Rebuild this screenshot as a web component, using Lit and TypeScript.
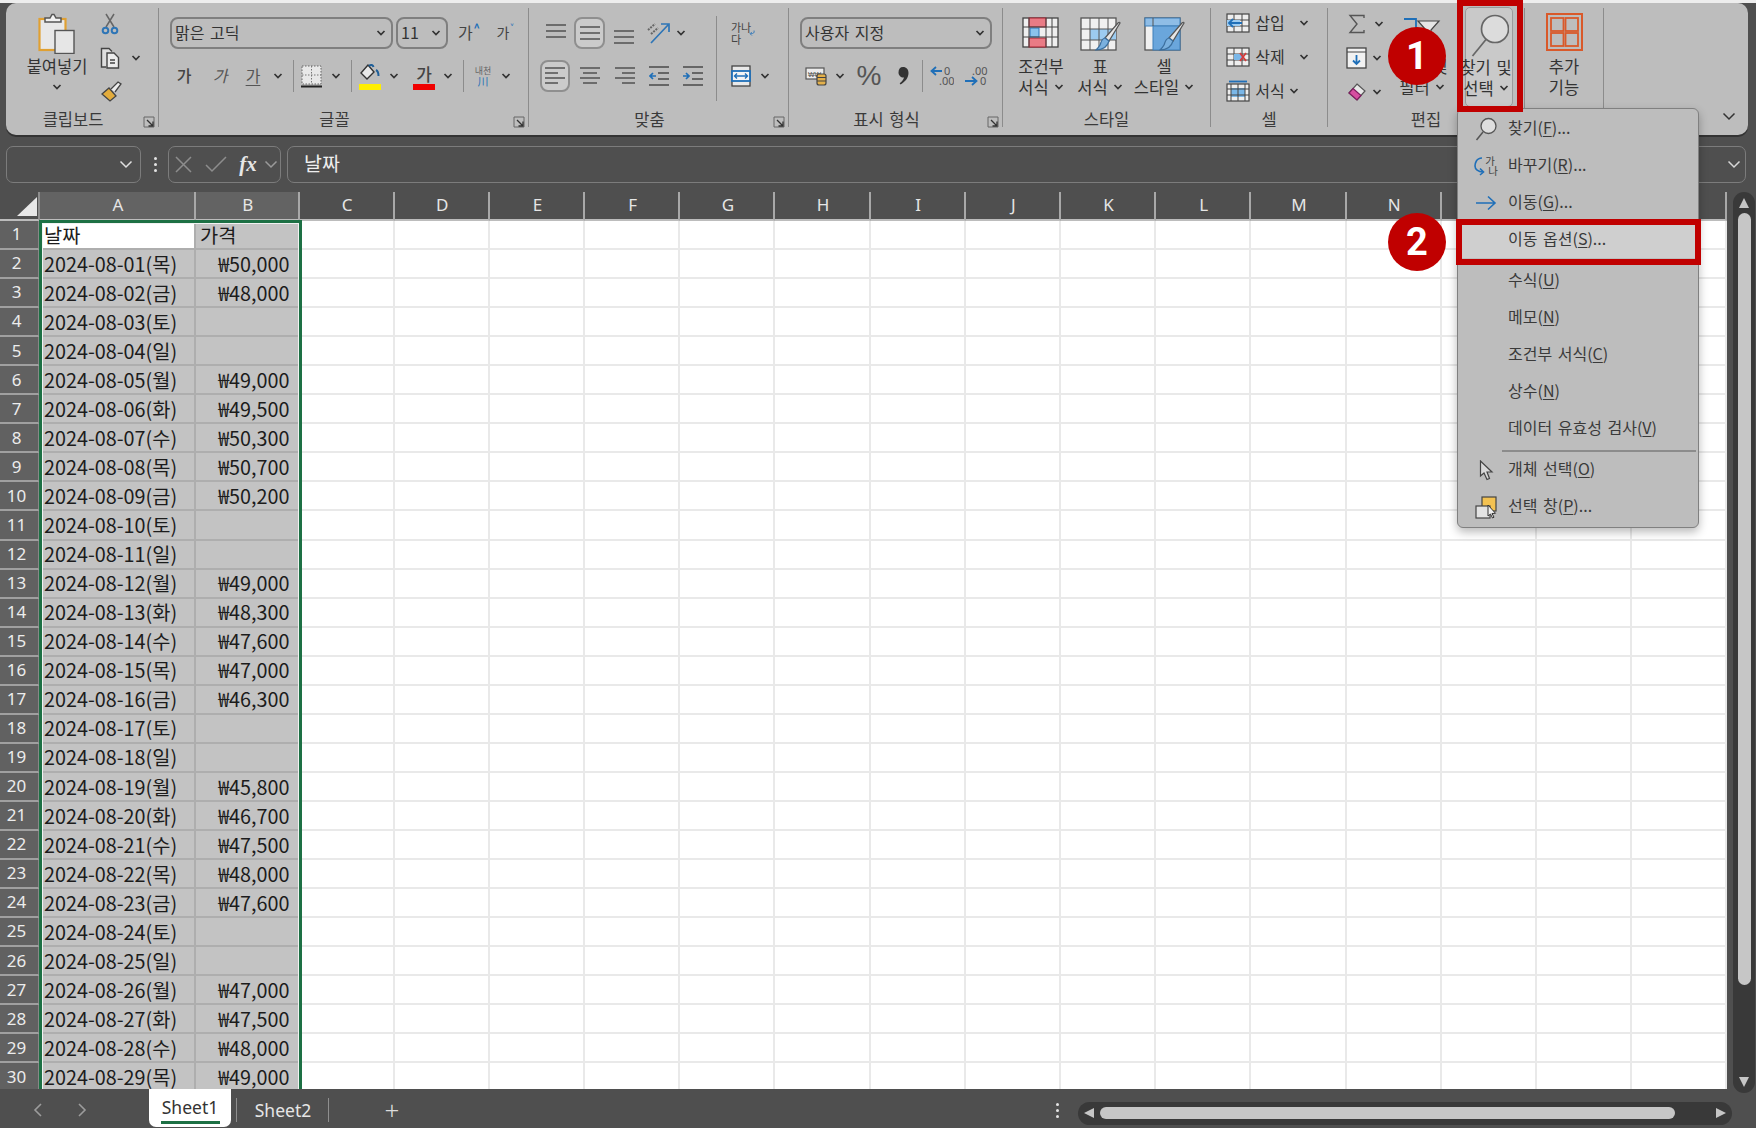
import { LitElement, html, css, svg } from "lit";
import { customElement } from "lit/decorators.js";

type Item = [number, number, unknown, string?];
const place = (items: Item[], x0: number) => {
  let p = x0;
  return items.map(([x, w, c, cls = ""]) => {
    const m = x - p;
    p = x + w;
    return html`<div class="t ${cls}" style="margin-left:${m}px;width:${w}px">${c}</div>`;
  });
};

const icon = (w: number, h: number, body: unknown) =>
  html`<svg width=${w} height=${h} viewBox="0 0 ${w} ${h}" fill="none">${body}</svg>`;
const chev = (c = "#333") =>
  html`<svg width="10" height="6" viewBox="0 0 10 6" fill="none"><path d="M1.5 1l3.5 3.5L8.5 1" stroke=${c} stroke-width="1.7"/></svg>`;
const bigChev = (c = "#333") =>
  html`<svg width="14" height="9" viewBox="0 0 14 9" fill="none"><path d="M1.5 1.5l5.5 5.5 5.5-5.5" stroke=${c} stroke-width="1.5"/></svg>`;

const pasteI = icon(37, 41, svg`
  <rect x="1.5" y="6" width="26" height="31" fill="#e8e8e8" stroke="#e0a032" stroke-width="2.2"/>
  <path d="M7 9V5h5l2-3.5h2L18 5h5v4z" fill="#f2f2f2" stroke="#555" stroke-width="1.5"/>
  <rect x="17" y="17.5" width="19" height="23" fill="#e6e6e6" stroke="#555" stroke-width="1.4"/>`);
const cutI = icon(18, 22, svg`
  <path d="M5 1l8 13M13 1L5 14" stroke="#666" stroke-width="1.5"/>
  <circle cx="4.5" cy="17.5" r="2.8" stroke="#2e75b6" stroke-width="2"/>
  <circle cx="13.5" cy="17.5" r="2.8" stroke="#2e75b6" stroke-width="2"/>`);
const copyI = icon(20, 22, svg`
  <path d="M6 20H1.5V1.5H9l3 3" stroke="#444" stroke-width="1.4" fill="#dedede"/>
  <path d="M7 6h7l4.500 4.500V21H7z" fill="#ececec" stroke="#444" stroke-width="1.4"/>
  <path d="M10 13h5M10 16h5" stroke="#444" stroke-width="1.3"/>`);
const painterI = icon(21, 21, svg`
  <path d="M1 13l7-6 7 8-6 5z" fill="#e3ac3c" stroke="#444" stroke-width="1.3"/>
  <path d="M10 8l7-7 3 2-6 8" fill="#ededed" stroke="#444" stroke-width="1.3"/>`);
const borderI = icon(21, 23, svg`
  <rect x="1" y="1" width="19" height="18" fill="#e8e8e8" stroke="#666" stroke-dasharray="1.500 1.500"/>
  <path d="M10.500 1v18M1 10h19" stroke="#777" stroke-dasharray="1.500 1.500"/>
  <path d="M0 21.500h21" stroke="#222" stroke-width="2"/>`);
const fillI = icon(22, 27, svg`
  <path d="M9 2L2 10l6 6 7-7z" fill="#e8e8e8" stroke="#333" stroke-width="1.4"/>
  <path d="M10 3c2-2 4-1 4.500 1M17 7c2 1 2.500 3 2.500 6" stroke="#1f5f99" stroke-width="2"/>
  <rect x="0" y="21" width="22" height="6" fill="#ffee00"/>`);
const alignLines = (ys: number[], w = 20, xs: [number, number][] = []) =>
  icon(w, 22, svg`${ys.map((y, i) => {
    const [a, b] = xs[i] ?? [0, w];
    return svg`<path d="M${a} ${y}H${b}" stroke="#4a4a4a" stroke-width="1.400"/>`;
  })}`);
const orientI = icon(24, 24, svg`
  <path d="M4 22L21 4M14 3h8v8" stroke="#2e75b6" stroke-width="1.700"/>
  <path d="M1 9l7-6M4 13l7-6" stroke="#666" stroke-width="2" stroke-dasharray="2 1"/>`);
const indentI = (out: boolean) => icon(20, 22, svg`
  <path d="M0 2H20M0 20H20M9 8H20M9 14H20" stroke="#4a4a4a" stroke-width="1.400"/>
  <path d=${out ? "M7 11H1M4 8l-3 3 3 3" : "M0 11H6M3 8l3 3-3 3"} stroke="#1f6fb8" stroke-width="1.700"/>`);
const mergeI = icon(20, 22, svg`
  <rect x="1" y="1" width="18" height="20" fill="#e9e9e9" stroke="#444" stroke-width="1.300"/>
  <rect x="1" y="6" width="18" height="10" fill="#f4f4f4" stroke="#1f6fb8" stroke-width="1.800"/>
  <path d="M4 11h12M6 8.500L3.500 11 6 13.500M14 8.500l2.500 2.500-2.500 2.500" stroke="#1f6fb8" stroke-width="1.400"/>`);
const acctI = icon(22, 20, svg`
  <rect x="1" y="2" width="18" height="11" fill="#ececec" stroke="#555" stroke-width="1.200"/>
  <text x="3" y="10.500" font-size="7" fill="#555" font-family="Liberation Sans">₩₩</text>
  <rect x="12" y="8" width="9" height="11" rx="2" fill="#e3b04b" stroke="#444" stroke-width="1.200"/>
  <path d="M12 11.500h9M12 15h9" stroke="#444"/>`);
const cfI = icon(37, 31, svg`
  <rect x="1" y="1" width="35" height="29" fill="#efefef" stroke="#444" stroke-width="1.300"/>
  <rect x="7" y="1" width="17" height="9" fill="#e97b85" stroke="#a62231"/>
  <rect x="7" y="21" width="17" height="9" fill="#e97b85" stroke="#a62231"/>
  <rect x="8" y="11" width="9" height="9" fill="#8bc3ec" stroke="#2e75b6"/>
  <path d="M7 1v29M24 1v29M30 1v29M1 10h35M1 20h35" stroke="#444" stroke-width="1"/>`);
const brush = svg`
  <path d="M38 6c1-1 2-1 2 0L29 24l-4-3z" fill="#e6e6e6" stroke="#555" stroke-width="1.200"/>
  <path d="M25 21c-4 1-4 5-5 7-1 2-3 4-4 5 5 0 11-2 13-9z" fill="#7ab0de" stroke="#3c6f9e" stroke-width="1.200"/>`;
const tableI = icon(41, 36, svg`
  <rect x="1" y="1" width="35" height="32" fill="#f0f0f0" stroke="#555" stroke-width="1.300"/>
  <rect x="10" y="12" width="26" height="11" fill="#9ccbf0"/>
  <path d="M10 1v32M19 1v32M28 1v32M1 12h35M1 23h35" stroke="#555"/>${brush}`);
const cellStyleI = icon(41, 36, svg`
  <rect x="1" y="1" width="35" height="32" fill="#f0f0f0" stroke="#555" stroke-width="1.300"/>
  <rect x="1" y="1" width="35" height="8" fill="#8fbde6" stroke="#3e7fb8"/>
  <rect x="9" y="9" width="27" height="24" fill="#6aa6dc" stroke="#3e7fb8"/>
  <path d="M9 1v8" stroke="#555"/>${brush}`);
const grid3 = (extra: unknown) => icon(24, 20, svg`
  <rect x="1" y="1" width="22" height="18" fill="#eee" stroke="#444" stroke-width="1.200"/>
  <path d="M8 1v18M16 1v18M1 7h22M1 13h22" stroke="#444" stroke-width="1"/>${extra}`);
const insI = grid3(svg`<rect x="1" y="7" width="13" height="6" fill="#9ccbf0"/><path d="M16 10H3M7 6l-4 4 4 4" stroke="#1f6fb8" stroke-width="1.800"/>`);
const delI = grid3(svg`<rect x="8" y="7" width="8" height="6" fill="#7ab7e8"/><path d="M14 6l6 8M20 6l-6 8" stroke="#d43b3b" stroke-width="1.800"/>`);
const fmtI = icon(24, 22, svg`
  <rect x="1" y="4" width="22" height="17" fill="#eee" stroke="#444" stroke-width="1.200"/>
  <rect x="5" y="8" width="14" height="9" fill="#7ab7e8"/>
  <path d="M5 4v17M12 4v17M19 4v17M1 9h22M1 15h22" stroke="#444" stroke-width="1"/>
  <path d="M3 1.500h18" stroke="#1f6fb8" stroke-width="1.800"/>`);
const sigmaI = icon(17, 20, svg`<path d="M16 4V1.500H2L9 10l-7 8.500h14V16" stroke="#555" stroke-width="1.400"/>`);
const fillDownI = icon(21, 22, svg`
  <rect x="1" y="1" width="19" height="20" fill="#f2f2f2" stroke="#444" stroke-width="1.300"/>
  <path d="M1 5h19" stroke="#444"/><path d="M10.500 8v9M7 13.500l3.500 3.500 3.500-3.500" stroke="#1f6fb8" stroke-width="1.800"/>`);
const eraserI = icon(20, 20, svg`
  <path d="M10 2l8 7-8 9-8-7z" fill="#e8e8e8" stroke="#555" stroke-width="1.200"/>
  <path d="M6 6.500l8 7-4 4.500-8-7z" fill="#d64fa0" stroke="#7d1e5f" stroke-width="1.200"/>`);
const sortI = icon(38, 22, svg`
  <path d="M1 2h12v18" stroke="#1f6fb8" stroke-width="1.800"/>
  <path d="M15 4h21l-8 9v6l-5 2v-8z" fill="#e6e6e6" stroke="#444" stroke-width="1.200"/>`);
const findBig = icon(38, 46, svg`
  <circle cx="24" cy="15" r="13.500" fill="#dcdcdc" stroke="#666" stroke-width="1.700"/>
  <path d="M15 25.500L1.500 42" stroke="#666" stroke-width="1.700"/>`);
const findSmall = icon(22, 24, svg`
  <circle cx="13.500" cy="9" r="7.500" fill="#dedede" stroke="#555" stroke-width="1.300"/>
  <path d="M8 15L1.500 23" stroke="#555" stroke-width="1.500"/>`);
const addinI = icon(37, 38, svg`
  <rect x="1" y="1" width="35" height="36" fill="none" stroke="#d9592a" stroke-width="2"/>
  <rect x="5" y="5" width="12.500" height="13" stroke="#d9592a" stroke-width="1.800"/>
  <rect x="19.500" y="5" width="12.500" height="13" stroke="#d9592a" stroke-width="1.800"/>
  <rect x="5" y="20" width="12.500" height="13" stroke="#d9592a" stroke-width="1.800"/>
  <rect x="19.500" y="20" width="12.500" height="13" stroke="#d9592a" stroke-width="1.800"/>`);
const launcher = html`<svg width="12" height="12" viewBox="0 0 12 12" fill="none">
  <path d="M1 11V1h10v10z" stroke="#666" stroke-width="1"/>
  <path d="M4 4l6 6M10 5.500V10H5.500" stroke="#333" stroke-width="1.300"/></svg>`;

const replaceI = html`<span class="rep"><svg width="11" height="21" viewBox="0 0 11 21" fill="none"><path d="M8 3C2 3 1 9 1 11c0 3 3 6 8 6M6 13.500L9.500 17 6 20" stroke="#1f6fb8" stroke-width="1.600"/></svg><span class="rep-t"><i>가</i><i>나</i></span></span>`;
const arrowI = icon(22, 16, svg`<path d="M1 8h19M13 1.500L20 8l-7 6.500" stroke="#1f6fb8" stroke-width="1.600"/>`);
const cursorI = icon(15, 21, svg`<path d="M1.500 1v15l3.500-3 3 6.500 2.500-1L8 12l5 0z" fill="#d9d9d9" stroke="#444" stroke-width="1.200"/>`);
const paneI = icon(23, 23, svg`
  <rect x="7" y="1" width="14" height="14" fill="#f3c252" stroke="#444" stroke-width="1.200"/>
  <rect x="1" y="10" width="14" height="12" fill="#e3e3e3" stroke="#444" stroke-width="1.200"/>
  <path d="M13 9v11l2.500-2 2 4 1.500-.8-2-3.700 3.500-.2z" fill="#eee" stroke="#333"/>`);

const days = ["일", "월", "화", "수", "목", "금", "토"];
const prices: (number | null)[] = [
  50000, 48000, null, null, 49000, 49500, 50300, 50700, 50200, null, null, 49000, 48300, 47600, 47000, 46300,
  null, null, 45800, 46700, 47500, 48000, 47600, null, null, 47000, 47500, 48000, 49000,
];
const COLS = "ABCDEFGHIJKLMNOPQ".split("");

const menuItems: { ic?: unknown; t: string; k: string; e?: string; cls?: string }[] = [
  { ic: findSmall, t: "찾기", k: "F", e: "..." },
  { ic: replaceI, t: "바꾸기", k: "R", e: "..." },
  { ic: arrowI, t: "이동", k: "G", e: "..." },
  { t: "이동 옵션", k: "S", e: "...", cls: "hot" },
  { t: "수식", k: "U" },
  { t: "메모", k: "N" },
  { t: "조건부 서식", k: "C" },
  { t: "상수", k: "N" },
  { t: "데이터 유효성 검사", k: "V", cls: "last" },
  { ic: cursorI, t: "개체 선택", k: "O" },
  { ic: paneI, t: "선택 창", k: "P", e: "..." },
];

@customElement("app-root")
export class AppRoot extends LitElement {
  static styles = css`
    :host {
      display: block;
      position: relative;
      width: 1756px;
      height: 1128px;
      overflow: hidden;
      background: #4f4f4f;
      font-family: "Noto Sans CJK KR", "Noto Sans", sans-serif;
      color: #333;
    }
    .t { flex: none; display: flex; align-items: center; justify-content: center; white-space: nowrap; }
    .w100 { width: 100%; }
    .topstrip { height: 3px; background: #ededed; }
    .ribbon {
      display: flex;
      height: 132px;
      margin: 0 8px 0 6px;
      background: #bdbdbd;
      border-radius: 10px;
      box-shadow: 0 2px 0 #333;
      font-size: 16.5px;
    }
    .group { display: flex; flex-direction: column; flex: none; }
    .gsep { flex: none; width: 1px; margin: 5px 0 8px; background: #8c8c8c; }
    .gsep.inner { margin: 13px 0 8px; }
    .body { height: 106px; display: flex; }
    .col { display: flex; flex-direction: column; }
    .alignL { width: 187px; }
    .label { height: 22px; display: flex; align-items: center; font-size: 16.5px; color: #3a3a3a; }
    .label span { flex: 1; text-align: center; margin-bottom: 2px; word-spacing: 2px; }
    .launch { flex: none; width: 18px; display: flex; justify-content: center; padding-top: 3px; }
    .rest { flex: 1; display: flex; justify-content: flex-end; align-items: flex-end; padding: 0 12px 14px 0; }
    .rtop { display: flex; height: 32px; margin-top: 14px; }
    .rbot { display: flex; height: 32px; margin-top: 11px; }
    .r3 { display: flex; height: 34px; }
    .r3:first-child { margin-top: 3px; }
    .vs { background: #8c8c8c; }
    .combo {
      box-sizing: border-box;
      width: 100%;
      height: 100%;
      border: 2px solid #7f7f7f;
      border-radius: 8px;
      display: flex;
      align-items: center;
      justify-content: space-between;
      padding: 0 5px 0 3px;
      font-size: 16px;
      word-spacing: 2px;
    }
    .combo span { margin-bottom: 3px; }
    .on { box-sizing: border-box; background: #cbcbcb; border: 2px solid #8f8f8f; border-radius: 8px; }
    .big { display: flex; flex-direction: column; align-items: center; align-self: stretch; }
    .bi { height: 54px; display: flex; align-items: flex-start; justify-content: center; padding-top: 10px; box-sizing: border-box; }
    .big.s14 .bi { padding-top: 14px; }
    .line { height: 20px; line-height: 20px; display: flex; align-items: center; gap: 5px; font-size: 16.5px; word-spacing: 2px; }
    .line:nth-child(2) { margin-top: -1px; margin-bottom: 1px; }
    .ga { font-size: 16px; color: #444; margin-bottom: 2px; }
    .ga-s { font-size: 14px; }
    .gab { font-weight: 500; }
    .gai { font-style: italic; color: #555; }
    .gau { text-decoration: underline; text-underline-offset: 3px; color: #555; }
    .up { font-size: 11px; color: #1f6fb8; font-weight: 700; margin-left: 1px; align-self: flex-start; margin-top: 3px; line-height: 14px; }
    .color { display: flex; flex-direction: column; align-items: center; line-height: 21px; font-size: 17px; font-weight: 500; color: #444; }
    .color b { display: block; width: 22px; height: 6px; background: #f00000; }
    .small2 { display: flex; flex-direction: column; font-size: 9px; line-height: 11px; color: #666; align-items: center; }
    .small2 em { font-style: normal; color: #2e75b6; font-size: 11px; }
    .small3 { font-size: 11px; line-height: 12px; color: #444; display: flex; flex-direction: column; margin-right: -2px; }
    .pct { font: 400 28px/1 "Liberation Sans", sans-serif; color: #555; }
    .celltxt { font-size: 16px; margin-bottom: 2px; }
    .find { background: #c9c9c9; border: 1px solid #9a9a9a; box-sizing: border-box; border-radius: 5px; height: 100px; margin-top: 4px; }
    .find .bi { height: 50px; padding-top: 6px; margin-left: 2px; }
    .find .line { margin-left: -6px; white-space: nowrap; }

    .fbar { display: flex; height: 37px; margin: 11px 10px 0 0; color: #eee; }
    .fbox { box-sizing: border-box; border: 1.500px solid #7c7c7c; border-radius: 7px; display: flex; align-items: center; height: 37px; width: 100%; }
    .name { justify-content: flex-end; padding-right: 7px; }
    .ftext { font-size: 19.5px; padding-left: 16px; justify-content: space-between; padding-right: 4px; }
    .ftext span { margin-bottom: 4px; }
    .dots { display: grid; gap: 3px; }
    .dots i, .hdots i { display: block; width: 3px; height: 3px; border-radius: 50%; background: #e4e4e4; }
    .fx { font-family: "Liberation Serif", serif; font-style: italic; font-weight: 700; font-size: 21px; color: #e6e6e6; }

    .sheet { display: flex; margin-top: 9px; height: 897px; }
    .gridwrap { position: relative; width: 1728px; height: 897px; overflow: hidden; flex: none; }
    .grid {
      display: grid;
      grid-template-columns: 40px 156px 103.500px repeat(15, 95.200px);
      grid-template-rows: 29px repeat(30, 29.060px);
    }
    .grid > div { box-sizing: border-box; display: flex; align-items: center; }
    .corner { background: #4f4f4f; border-right: 2px solid #8e8e8e; border-bottom: 2px solid #bcbcbc; justify-content: flex-end; align-items: flex-end !important; padding: 0 1px 3px 0; }
    .ch {
      background: #4f4f4f; color: #e6e6e6; font-family: "Noto Sans", sans-serif; font-size: 17px;
      justify-content: center; border-right: 2px solid #a8a8a8; border-bottom: 2px solid #bcbcbc;
      padding: 0 0 3px 2px;
    }
    .ch.sel { background: #636363; }
    .rh {
      background: #616161; color: #ececec; font-family: "Noto Sans", sans-serif; font-size: 17px;
      justify-content: center; padding-right: 5px; border-bottom: 2px solid #a0a0a0; border-right: 2px solid #888;
      line-height: 1.2;
    }
    .c {
      background: #fff; border-right: 2px solid #e9e9e9; border-bottom: 2px solid #e9e9e9;
      font-size: 19.800px; line-height: 1.2; color: #1c1c1c; white-space: nowrap; padding: 0 8px 0 4px;
    }
    .c.s { background: #c3c3c3; border-color: #aeaeae; }
    .c.w { background: #fff; }
    .c.r { justify-content: flex-end; }
    .selbox {
      position: absolute; left: 38.500px; top: 28px; width: 263px; height: 880px;
      box-sizing: border-box; border: 3px solid #1d7044; box-shadow: inset 0 0 0 1px #f2f2f2;
    }
    .vbar {
      flex: none; box-sizing: border-box; margin-left: 5px; width: 22px; height: 901px;
      border-radius: 11px; background: #393939; display: flex; flex-direction: column; align-items: center;
      padding: 6px 0;
    }
    .vthumb { width: 13px; height: 772px; margin: 5px 0 auto; background: #c6c6c6; border-radius: 7px; }
    .tri { width: 0; height: 0; border: 0 solid transparent; }
    .tri.u { border-width: 0 5.500px 10px; border-bottom-color: #c6c6c6; }
    .tri.d { border-width: 10px 5.500px 0; border-top-color: #c6c6c6; }
    .tri.l { border-width: 5.500px 10px 5.500px 0; border-right-color: #c6c6c6; }
    .tri.rr { border-width: 5.500px 0 5.500px 10px; border-left-color: #c6c6c6; }

    .tabs { display: flex; height: 39px; color: #e6e6e6; font-family: "Noto Sans", sans-serif; font-size: 17.5px; }
    .tab { background: #fff; color: #333; border-radius: 0 0 7px 7px; height: 38px; flex-direction: column; }
    .tab span { line-height: 26px; margin-top: 2px; }
    .tab b { display: block; width: 59px; height: 2.500px; background: #1d7044; margin-top: 1px; }
    .ts { width: 1px; height: 24px; background: #8f8f8f; }
    .tsw { height: 39px; box-sizing: border-box; padding-top: 3px; }
    .plus { font-size: 26px; line-height: 1; font-weight: 300; color: #ddd; }
    .hdots { display: grid; gap: 3px; }
    .hbar {
      box-sizing: border-box; height: 23px; margin-top: 9px; border-radius: 12px; background: #393939;
      display: flex; align-items: center; padding: 0 6px; width: 100%;
    }
    .hthumb { width: 575px; height: 12px; background: #c6c6c6; border-radius: 6px; margin: 0 auto 0 6px; }

    .menu {
      position: absolute; left: 1457px; top: 108px; width: 242px; box-sizing: border-box;
      background: #bdbdbd; border: 1.500px solid #808080; border-radius: 6px; padding: 1px 0;
      box-shadow: 0 4px 10px rgba(0, 0, 0, 0.28); color: #3a3a3a; font-size: 16px; word-spacing: 2px;
    }
    .mi { display: flex; align-items: center; height: 37px; white-space: nowrap; }
    .ms { flex: none; width: 50px; box-sizing: border-box; padding-left: 6px; display: flex; justify-content: center; align-items: center; }
    .mt { margin-bottom: 4px; }
    .mi.hot { background: #cfcfcf; margin: 0 0 4px; }
    .mi.last { margin-bottom: 3px; }
    .msep { height: 1.500px; background: #8c8c8c; margin: 0 2px 0 44px; }
    .mi u { text-underline-offset: 2px; }
    .rep { display: flex; align-items: center; gap: 0; }
    .rep-t { display: flex; flex-direction: column; font-size: 10.500px; line-height: 10px; color: #444; }
    .rep-t i { font-style: normal; }
    .rep-t i:last-child { margin-left: 3px; }

    .redbox { position: absolute; box-sizing: border-box; border: 6px solid #c00000; }
    .r1 { left: 1457px; top: 0; width: 66px; height: 112px; }
    .r2 { left: 1456px; top: 219px; width: 245px; height: 46px; }
    .num {
      position: absolute; left: 1388px; width: 58px; height: 58px; border-radius: 50%; background: #c00000;
      color: #fff; font-family: "Roboto", sans-serif; font-weight: 700; font-size: 38px; line-height: 58px; text-align: center;
    }
    .n1 { top: 27px; }
    .n2 { top: 213px; }
  `;

  private group(w: number, body: unknown, label: string, launch = false) {
    return html`<section class="group" style="width:${w}px">
      <div class="body">${body}</div>
      <div class="label"><span>${label}</span>${launch ? html`<div class="launch">${launcher}</div>` : ""}</div>
    </section><div class="gsep"></div>`;
  }

  private big(icon_: unknown, l1: unknown, l2: unknown, cls = "") {
    return html`<div class="big ${cls}"><div class="bi">${icon_}</div><div class="line">${l1}</div><div class="line">${l2}</div></div>`;
  }

  private ribbon() {
    const clip = place([
      [12, 90, this.big(pasteI, "붙여넣기", chev())],
      [100, 42, html`<div class="col">
        <div class="r3">${place([[100, 18, cutI]], 100)}</div>
        <div class="r3">${place([[99, 20, copyI], [130, 10, chev()]], 100)}</div>
        <div class="r3">${place([[100, 21, painterI]], 100)}</div>
      </div>`],
    ], 6);
    const font = html`<div class="col">
      <div class="rtop">${place([
        [170, 223, html`<div class="combo"><span>맑은 고딕</span>${chev()}</div>`],
        [396, 52, html`<div class="combo"><span>11</span>${chev()}</div>`],
        [457, 24, html`<span class="ga">가</span><span class="up">^</span>`],
        [494, 22, html`<span class="ga ga-s">가</span><span class="up">˅</span>`],
      ], 159)}</div>
      <div class="rbot">${place([
        [172, 24, html`<span class="ga gab">가</span>`],
        [208, 24, html`<span class="ga gai">가</span>`],
        [241, 24, html`<span class="ga gau">가</span>`],
        [273, 10, chev()],
        [293, 1, "", "vs"],
        [301, 21, borderI],
        [331, 10, chev()],
        [351, 1, "", "vs"],
        [359, 22, fillI],
        [389, 10, chev()],
        [413, 22, html`<span class="color">가<b></b></span>`],
        [443, 10, chev()],
        [463, 1, "", "vs"],
        [471, 24, html`<span class="small2">내천<em>川</em></span>`],
        [501, 10, chev()],
      ], 159)}</div>
    </div>`;
    const top = alignLines([3, 9, 15]);
    const mid = alignLines([5, 11, 17]);
    const bot = alignLines([9, 15, 21]);
    const left = alignLines([3, 8, 13, 18], 20, [[0, 20], [0, 13], [0, 20], [0, 13]]);
    const cen = alignLines([3, 8, 13, 18], 20, [[0, 20], [3, 17], [0, 20], [3, 17]]);
    const rig = alignLines([3, 8, 13, 18], 20, [[0, 20], [7, 20], [0, 20], [7, 20]]);
    const align = html`
      <div class="col alignL">
        <div class="rtop">${place([
          [546, 20, top],
          [574, 31, mid, "on"],
          [614, 20, bot],
          [647, 24, orientI],
          [676, 10, chev()],
        ], 529)}</div>
        <div class="rbot">${place([
          [540, 30, left, "on"],
          [580, 20, cen],
          [615, 20, rig],
          [649, 20, indentI(true)],
          [683, 20, indentI(false)],
        ], 529)}</div>
      </div>
      <div class="gsep inner"></div>
      <div class="col">
        <div class="rtop">${place([[731, 24, html`<span class="small3"><span>가나</span><span>다</span></span><svg width="16" height="16" viewBox="0 0 16 16" fill="none"><path d="M14 1c2 7-2 9-10 9M8 5L3 10l5 5" stroke="#1f6fb8" stroke-width="2.200"/></svg>`]], 717)}</div>
        <div class="rbot">${place([[731, 20, mergeI], [760, 10, chev()]], 717)}</div>
      </div>`;
    const num = html`<div class="col">
      <div class="rtop">${place([[800, 192, html`<div class="combo"><span>사용자 지정</span>${chev()}</div>`]], 789)}</div>
      <div class="rbot">${place([
        [805, 22, acctI],
        [835, 10, chev()],
        [856, 26, html`<span class="pct">%</span>`],
        [896, 14, html`<svg width="11" height="20" viewBox="0 0 11 20"><path d="M5 1c3.500 0 5.500 2.500 5.500 6 0 5-3.500 9-8 11.500l-.8-1.200C4 15.500 5.500 13.500 6 11.500 3 11.800.5 9.500.5 6.500.5 3 2 1 5 1z" fill="#333"/></svg>`],
        [922, 1, "", "vs"],
        [930, 24, html`<svg width="24" height="22" viewBox="0 0 24 22" fill="none"><path d="M12 6H2M6 2L1.500 6 6 10" stroke="#1f6fb8" stroke-width="1.800"/><text x="14" y="10" font-size="11" fill="#555" font-family="Noto Sans">0</text><text x="9" y="20" font-size="11" fill="#555" font-family="Noto Sans">.00</text></svg>`],
        [965, 24, html`<svg width="24" height="22" viewBox="0 0 24 22" fill="none"><text x="7" y="10" font-size="11" fill="#555" font-family="Noto Sans">.00</text><path d="M0 16H11M7 12l4.500 4L7 20" stroke="#1f6fb8" stroke-width="1.800"/><text x="15" y="20" font-size="11" fill="#555" font-family="Noto Sans">0</text></svg>`],
      ], 789)}</div>
    </div>`;
    const styles = place([
      [1011, 60, this.big(cfI, "조건부", html`서식 ${chev()}`, "s14")],
      [1070, 60, this.big(tableI, "표", html`서식 ${chev()}`, "s14")],
      [1134, 60, this.big(cellStyleI, "셀", html`스타일 ${chev()}`, "s14")],
    ], 1003);
    const cellRow = (ic: unknown, t: string, chevX: number) => html`<div class="r3">${place([
      [1226, 24, ic],
      [1253, 34, html`<span class="celltxt">${t}</span>`],
      [chevX, 10, chev()],
    ], 1211)}</div>`;
    const cells = html`<div class="col">
      ${cellRow(insI, "삽입", 1299)}${cellRow(delI, "삭제", 1299)}${cellRow(fmtI, "서식", 1289)}
    </div>`;
    const edit = place([
      [1344, 42, html`<div class="col">
        <div class="r3">${place([[1346, 17, sigmaI], [1372, 10, chev()]], 1344)}</div>
        <div class="r3">${place([[1344, 21, fillDownI], [1370, 10, chev()]], 1344)}</div>
        <div class="r3">${place([[1345, 20, eraserI], [1370, 10, chev()]], 1344)}</div>
      </div>`],
      [1392, 60, this.big(sortI, "정렬 및", html`필터 ${chev()}`, "s14")],
      [1463, 52, this.big(findBig, "찾기 및", html`선택 ${chev()}`, "find")],
    ], 1328);
    const add = place([[1534, 60, this.big(addinI, "추가", "기능")]], 1525);
    return html`<div class="ribbon">
      ${this.group(152, clip, "클립보드", true)}
      ${this.group(369, font, "글꼴", true)}
      ${this.group(259, align, "맞춤", true)}
      ${this.group(213, num, "표시 형식", true)}
      ${this.group(207, styles, "스타일")}
      ${this.group(116, cells, "셀")}
      ${this.group(196, edit, "편집")}
      ${this.group(78, add, "")}
      <div class="rest">${bigChev()}</div>
    </div>`;
  }

  private formula() {
    return html`<div class="fbar">${place([
      [6, 135, html`<div class="fbox name">${bigChev("#e0e0e0")}</div>`],
      [153, 5, html`<div class="dots"><i></i><i></i><i></i></div>`],
      [168, 113, html`<div class="fbox">${place([
        [175, 17, html`<svg width="17" height="17" viewBox="0 0 17 17"><path d="M1 1l15 15M16 1L1 16" stroke="#8d8d8d" stroke-width="1.500"/></svg>`],
        [205, 22, html`<svg width="22" height="17" viewBox="0 0 22 17" fill="none"><path d="M1 9l6 6L21 1" stroke="#8d8d8d" stroke-width="1.500"/></svg>`],
        [238, 20, html`<span class="fx">fx</span>`],
        [264, 14, bigChev("#9a9a9a")],
      ], 169)}</div>`],
      [287, 1459, html`<div class="fbox ftext"><span>날짜</span>${bigChev("#d8d8d8")}</div>`],
    ], 0)}</div>`;
  }

  private sheet() {
    const cells: unknown[] = [];
    cells.push(html`<div class="corner"><svg width="20" height="19" viewBox="0 0 20 19"><path d="M20 0v19H0z" fill="#e8e8e8"/></svg></div>`);
    COLS.forEach((c, i) => cells.push(html`<div class="ch ${i < 2 ? "sel" : ""}">${c}</div>`));
    for (let r = 1; r <= 30; r++) {
      cells.push(html`<div class="rh">${r}</div>`);
      let a = "날짜";
      let b = "가격";
      let right = false;
      if (r > 1) {
        const d = r - 1;
        const wd = days[new Date(2024, 7, d).getDay()];
        a = `2024-08-${String(d).padStart(2, "0")}(${wd})`;
        const p = prices[d - 1];
        b = p == null ? "" : `₩${p.toLocaleString("en-US")}`;
        right = true;
      }
      cells.push(html`<div class="c s ${r === 1 ? "w" : ""}">${a}</div>`);
      cells.push(html`<div class="c s ${right ? "r" : ""}">${b}</div>`);
      for (let i = 2; i < COLS.length; i++) cells.push(html`<div class="c"></div>`);
    }
    return html`<div class="sheet">
      <div class="gridwrap">
        <div class="grid">${cells}</div>
        <div class="selbox"></div>
      </div>
      <div class="vbar"><div class="tri u"></div><div class="vthumb"></div><div class="tri d"></div></div>
    </div>`;
  }

  private tabs() {
    return html`<div class="tabs">${place([
      [32, 12, html`<svg width="10" height="16" viewBox="0 0 10 16" fill="none"><path d="M8 2L2 8l6 6" stroke="#9c9c9c" stroke-width="1.600"/></svg>`, "tsw"],
      [76, 12, html`<svg width="10" height="16" viewBox="0 0 10 16" fill="none"><path d="M2 2l6 6-6 6" stroke="#9c9c9c" stroke-width="1.600"/></svg>`, "tsw"],
      [149, 82, html`<span>Sheet1</span><b></b>`, "tab"],
      [236, 1, html`<div class="ts"></div>`, "tsw"],
      [250, 66, "Sheet2", "tsw"],
      [328, 1, html`<div class="ts"></div>`, "tsw"],
      [380, 24, html`<span class="plus">+</span>`, "tsw"],
      [1054, 6, html`<div class="hdots"><i></i><i></i><i></i></div>`, "tsw"],
      [1078, 654, html`<div class="hbar"><div class="tri l"></div><div class="hthumb"></div><div class="tri rr"></div></div>`, "hw"],
    ], 0)}</div>`;
  }

  private menu() {
    return html`<div class="menu">
      ${menuItems.map(
        (m) => html`<div class="mi ${m.cls ?? ""}"><span class="ms">${m.ic ?? ""}</span><span class="mt">${m.t}(<u>${m.k}</u>)${m.e ?? ""}</span></div>
          ${m.cls === "last" ? html`<div class="msep"></div>` : ""}`
      )}
    </div>`;
  }

  render() {
    return html`
      <div class="topstrip"></div>
      ${this.ribbon()}
      ${this.formula()}
      ${this.sheet()}
      ${this.tabs()}
      ${this.menu()}
      <div class="redbox r1"></div>
      <div class="redbox r2"></div>
      <div class="num n1">1</div>
      <div class="num n2">2</div>
    `;
  }
}
